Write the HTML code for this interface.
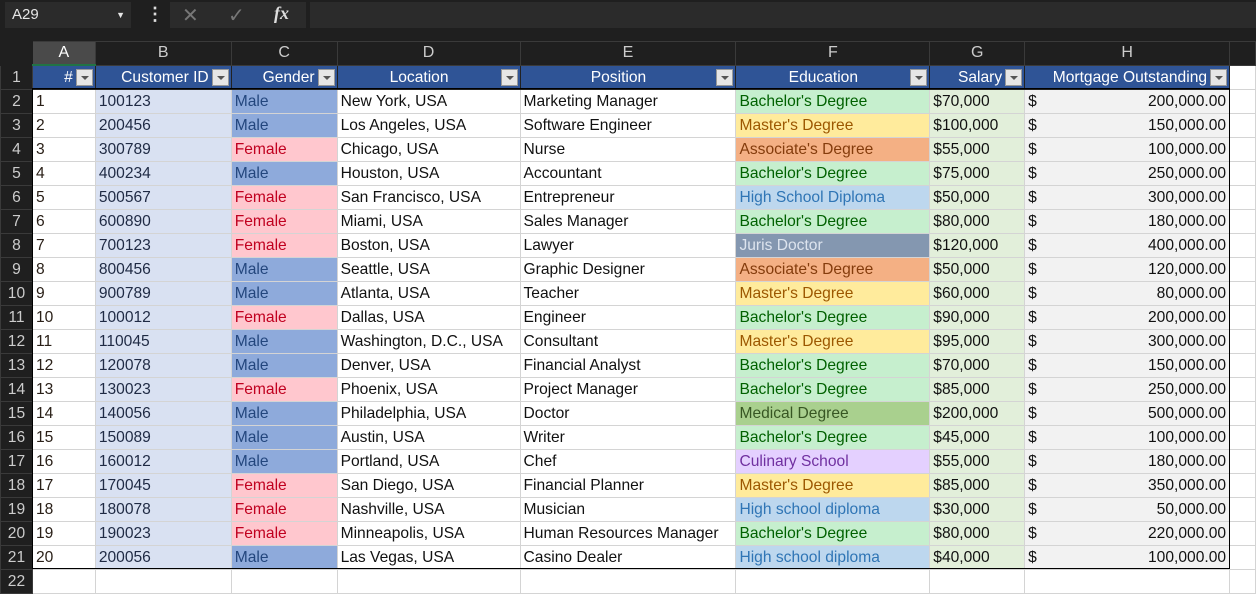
<!DOCTYPE html><html><head><style>
body{margin:0;width:1256px;height:591px;background:#1f1f1f;overflow:hidden;font-family:"Liberation Sans",sans-serif;position:relative}
.top{position:absolute;left:0;top:0;width:1256px;height:31px;background:#1f1f1f}
.nb{position:absolute;left:5px;top:2px;width:126px;height:26px;background:#2b2b2b;color:#e6e6e6;font-size:15px;line-height:26px;padding-left:7px;box-sizing:border-box}
.fb{position:absolute;left:170px;top:2px;width:136px;height:26px;background:#2b2b2b}
.fb2{position:absolute;left:310px;top:2px;width:946px;height:26px;background:#2b2b2b}
table{position:absolute;left:0;top:41px;border-collapse:collapse;table-layout:fixed;font-size:15.6px}
td{height:22px;line-height:22px;padding:1px 3px 0;white-space:nowrap;overflow:hidden;border:1px solid #d4d4d4;color:#111;background:#fff}
tr.ch td{background:#1f1f1f;color:#ccc;text-align:center;border:1px solid #3a3a3a;height:22px;font-size:16px;line-height:22px;padding:0}
td.rh{background:#1f1f1f;color:#ccc;text-align:center;border:1px solid #3a3a3a;padding:1px 0 0}
tr.h td.c{background:#2f5496;color:#fff;text-align:center;padding-right:22px;position:relative;border-color:#222}
tr.h td.r{text-align:right}
.dd{position:absolute;right:2px;top:3px;width:17px;height:17px;background:#e6e6e6;border:1px solid #999;box-sizing:border-box}
.dd:after{content:"";position:absolute;left:4px;top:6px;border-left:4px solid transparent;border-right:4px solid transparent;border-top:4px solid #555}
.a{color:#2a2018}.b{background:#d9e1f2!important;color:#1f2a44}
.m{background:#8eaadb!important;color:#23467d}.f{background:#ffc7ce!important;color:#c0001f}
.ba{background:#c6efce!important;color:#006100}.ma{background:#ffeb9c!important;color:#9c5700}
.as{background:#f4b084!important;color:#843c0c}.hs{background:#bdd7ee!important;color:#2f75b5}
.jd{background:#8497b0!important;color:#dde4ee}.md{background:#a9d08e!important;color:#375623}
.cu{background:#e4d0ff!important;color:#7030a0}.s{background:#e2efda!important}
.h{background:#f2f2f2!important}
.h span{float:right}
</style></head><body>
<div class="top"><div class="nb">A29<span style="position:absolute;right:6px;top:0;font-size:9px">▼</span></div>
<div style="position:absolute;left:146px;top:4px;color:#ddd;font-size:18px;font-weight:bold">⋮</div>
<div class="fb"><span style="position:absolute;left:12px;top:1px;color:#777;font-size:20px">✕</span><span style="position:absolute;left:58px;top:1px;color:#777;font-size:20px">✓</span><span style="position:absolute;left:104px;top:1px;color:#ddd;font-size:18px;font-style:italic;font-family:'Liberation Serif',serif;font-weight:bold">fx</span></div>
<div class="fb2"></div></div>
<div style="position:absolute;left:12px;top:45px;width:0;height:0;border-left:16px solid transparent;border-bottom:16px solid #6a6a6a"></div>
<table>
<colgroup><col style="width:32px"><col style="width:63px"><col style="width:136px"><col style="width:106px"><col style="width:183px"><col style="width:216px"><col style="width:194px"><col style="width:95px"><col style="width:205px"><col style="width:26px"></colgroup>
<tr class="ch"><td style="border-color:#1f1f1f"></td><td style="background:#4a4a4a;color:#fff;border-bottom:2px solid #217346">A</td><td>B</td><td>C</td><td>D</td><td>E</td><td>F</td><td>G</td><td>H</td><td></td></tr>
<tr class="h"><td class="rh">1</td><td class="c r">#<i class="dd"></i></td><td class="c r">Customer ID<i class="dd"></i></td><td class="c r">Gender<i class="dd"></i></td><td class="c">Location<i class="dd"></i></td><td class="c">Position<i class="dd"></i></td><td class="c">Education<i class="dd"></i></td><td class="c r">Salary<i class="dd"></i></td><td class="c r">Mortgage Outstanding<i class="dd"></i></td><td></td></tr>
<tr><td class="rh">2</td><td class="a">1</td><td class="b">100123</td><td class="m">Male</td><td>New York, USA</td><td>Marketing Manager</td><td class="ba">Bachelor's Degree</td><td class="s">$70,000</td><td class="h">$<span>200,000.00</span></td><td></td></tr>
<tr><td class="rh">3</td><td class="a">2</td><td class="b">200456</td><td class="m">Male</td><td>Los Angeles, USA</td><td>Software Engineer</td><td class="ma">Master's Degree</td><td class="s">$100,000</td><td class="h">$<span>150,000.00</span></td><td></td></tr>
<tr><td class="rh">4</td><td class="a">3</td><td class="b">300789</td><td class="f">Female</td><td>Chicago, USA</td><td>Nurse</td><td class="as">Associate's Degree</td><td class="s">$55,000</td><td class="h">$<span>100,000.00</span></td><td></td></tr>
<tr><td class="rh">5</td><td class="a">4</td><td class="b">400234</td><td class="m">Male</td><td>Houston, USA</td><td>Accountant</td><td class="ba">Bachelor's Degree</td><td class="s">$75,000</td><td class="h">$<span>250,000.00</span></td><td></td></tr>
<tr><td class="rh">6</td><td class="a">5</td><td class="b">500567</td><td class="f">Female</td><td>San Francisco, USA</td><td>Entrepreneur</td><td class="hs">High School Diploma</td><td class="s">$50,000</td><td class="h">$<span>300,000.00</span></td><td></td></tr>
<tr><td class="rh">7</td><td class="a">6</td><td class="b">600890</td><td class="f">Female</td><td>Miami, USA</td><td>Sales Manager</td><td class="ba">Bachelor's Degree</td><td class="s">$80,000</td><td class="h">$<span>180,000.00</span></td><td></td></tr>
<tr><td class="rh">8</td><td class="a">7</td><td class="b">700123</td><td class="f">Female</td><td>Boston, USA</td><td>Lawyer</td><td class="jd">Juris Doctor</td><td class="s">$120,000</td><td class="h">$<span>400,000.00</span></td><td></td></tr>
<tr><td class="rh">9</td><td class="a">8</td><td class="b">800456</td><td class="m">Male</td><td>Seattle, USA</td><td>Graphic Designer</td><td class="as">Associate's Degree</td><td class="s">$50,000</td><td class="h">$<span>120,000.00</span></td><td></td></tr>
<tr><td class="rh">10</td><td class="a">9</td><td class="b">900789</td><td class="m">Male</td><td>Atlanta, USA</td><td>Teacher</td><td class="ma">Master's Degree</td><td class="s">$60,000</td><td class="h">$<span>80,000.00</span></td><td></td></tr>
<tr><td class="rh">11</td><td class="a">10</td><td class="b">100012</td><td class="f">Female</td><td>Dallas, USA</td><td>Engineer</td><td class="ba">Bachelor's Degree</td><td class="s">$90,000</td><td class="h">$<span>200,000.00</span></td><td></td></tr>
<tr><td class="rh">12</td><td class="a">11</td><td class="b">110045</td><td class="m">Male</td><td>Washington, D.C., USA</td><td>Consultant</td><td class="ma">Master's Degree</td><td class="s">$95,000</td><td class="h">$<span>300,000.00</span></td><td></td></tr>
<tr><td class="rh">13</td><td class="a">12</td><td class="b">120078</td><td class="m">Male</td><td>Denver, USA</td><td>Financial Analyst</td><td class="ba">Bachelor's Degree</td><td class="s">$70,000</td><td class="h">$<span>150,000.00</span></td><td></td></tr>
<tr><td class="rh">14</td><td class="a">13</td><td class="b">130023</td><td class="f">Female</td><td>Phoenix, USA</td><td>Project Manager</td><td class="ba">Bachelor's Degree</td><td class="s">$85,000</td><td class="h">$<span>250,000.00</span></td><td></td></tr>
<tr><td class="rh">15</td><td class="a">14</td><td class="b">140056</td><td class="m">Male</td><td>Philadelphia, USA</td><td>Doctor</td><td class="md">Medical Degree</td><td class="s">$200,000</td><td class="h">$<span>500,000.00</span></td><td></td></tr>
<tr><td class="rh">16</td><td class="a">15</td><td class="b">150089</td><td class="m">Male</td><td>Austin, USA</td><td>Writer</td><td class="ba">Bachelor's Degree</td><td class="s">$45,000</td><td class="h">$<span>100,000.00</span></td><td></td></tr>
<tr><td class="rh">17</td><td class="a">16</td><td class="b">160012</td><td class="m">Male</td><td>Portland, USA</td><td>Chef</td><td class="cu">Culinary School</td><td class="s">$55,000</td><td class="h">$<span>180,000.00</span></td><td></td></tr>
<tr><td class="rh">18</td><td class="a">17</td><td class="b">170045</td><td class="f">Female</td><td>San Diego, USA</td><td>Financial Planner</td><td class="ma">Master's Degree</td><td class="s">$85,000</td><td class="h">$<span>350,000.00</span></td><td></td></tr>
<tr><td class="rh">19</td><td class="a">18</td><td class="b">180078</td><td class="f">Female</td><td>Nashville, USA</td><td>Musician</td><td class="hs">High school diploma</td><td class="s">$30,000</td><td class="h">$<span>50,000.00</span></td><td></td></tr>
<tr><td class="rh">20</td><td class="a">19</td><td class="b">190023</td><td class="f">Female</td><td>Minneapolis, USA</td><td>Human Resources Manager</td><td class="ba">Bachelor's Degree</td><td class="s">$80,000</td><td class="h">$<span>220,000.00</span></td><td></td></tr>
<tr><td class="rh">21</td><td class="a">20</td><td class="b">200056</td><td class="m">Male</td><td>Las Vegas, USA</td><td>Casino Dealer</td><td class="hs">High school diploma</td><td class="s">$40,000</td><td class="h">$<span>100,000.00</span></td><td></td></tr>
<tr><td class="rh">22</td><td></td><td></td><td></td><td></td><td></td><td></td><td></td><td></td><td></td></tr>
</table>
<div style="position:absolute;left:32px;top:88px;width:1198px;height:481px;border:1px solid #000;box-sizing:border-box;pointer-events:none"></div>
</body></html>
